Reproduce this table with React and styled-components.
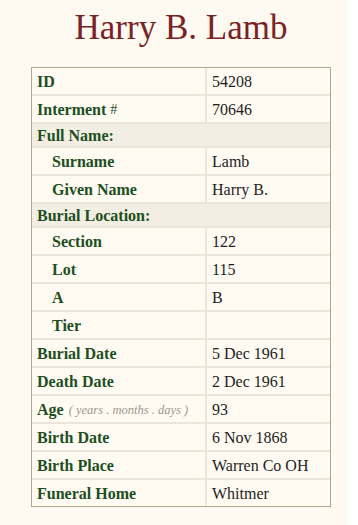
import React from "react";
import styled, { createGlobalStyle } from "styled-components";

const GlobalStyle = createGlobalStyle`
  html, body {
    margin: 0;
    padding: 0;
    background: #ffffff;
  }
  body {
    font-family: "Liberation Serif", "Times New Roman", serif;
  }
`;

const record = [
  { label: "ID", value: "54208" },
  { label: "Interment", mark: "#", value: "70646" },
  { section: "Full Name:" },
  { label: "Surname", value: "Lamb", indent: true },
  { label: "Given Name", value: "Harry B.", indent: true },
  { section: "Burial Location:" },
  { label: "Section", value: "122", indent: true },
  { label: "Lot", value: "115", indent: true },
  { label: "A", value: "B", indent: true },
  { label: "Tier", value: "", indent: true },
  { label: "Burial Date", value: "5 Dec 1961" },
  { label: "Death Date", value: "2 Dec 1961" },
  { label: "Age", value: "93", hint: "( years . months . days )" },
  { label: "Birth Date", value: "6 Nov 1868" },
  { label: "Birth Place", value: "Warren Co OH" },
  { label: "Funeral Home", value: "Whitmer" },
];

const App = () => {
  return (
    <>
      <GlobalStyle />
      <Page>
        <Title>Harry B. Lamb</Title>
        <Table>
          {record.map((row) =>
            row.section ? (
              <Section key={row.section}>{row.section}</Section>
            ) : (
              <React.Fragment key={row.label}>
                <Label $indent={row.indent}>
                  {row.label}
                  {row.mark && <Mark>{row.mark}</Mark>}
                  {row.hint && <Hint>{row.hint}</Hint>}
                </Label>
                <Value>{row.value}</Value>
              </React.Fragment>
            )
          )}
        </Table>
      </Page>
    </>
  );
};

export default App;

const Page = styled.div`
  width: 347px;
  min-height: 525px;
  background: #fefaf2;
  box-sizing: border-box;
  padding-top: 6px;
  padding-left: 31px;
`;

const Title = styled.h1`
  margin: 0 0 18px 0;
  width: 300px;
  text-align: center;
  font-family: "Liberation Serif", "Times New Roman", serif;
  font-weight: 400;
  font-size: 35px;
  line-height: 43px;
  color: #7a2226;
`;

const Table = styled.div`
  width: 300px;
  box-sizing: border-box;
  border: 1px solid #b2a68f;
  background: #ece6da;
  display: grid;
  grid-template-columns: 173px 1fr;
  gap: 2px;
`;

const Cell = styled.div`
  height: 26px;
  box-sizing: border-box;
  background: #fffaf2;
  display: flex;
  align-items: center;
  padding-top: 2px;
  font-size: 16px;
  white-space: nowrap;
`;

const Label = styled(Cell)`
  padding-left: ${(p) => (p.$indent ? "20px" : "5px")};
  font-weight: 700;
  color: #1d4f1f;
`;

const Mark = styled.span`
  font-weight: 400;
  font-size: 14px;
  margin-left: 4px;
`;

const Value = styled(Cell)`
  padding-left: 5px;
  color: #1e1e1e;
`;

const Section = styled.div`
  grid-column: 1 / -1;
  height: 22px;
  box-sizing: border-box;
  background: #f3eee4;
  display: flex;
  align-items: center;
  padding-left: 5px;
  padding-top: 1px;
  font-size: 16px;
  font-weight: 700;
  color: #1d4f1f;
`;

const Hint = styled.span`
  margin-left: 5px;
  font-size: 12.5px;
  font-weight: 400;
  font-style: italic;
  color: #9a9890;
`;
